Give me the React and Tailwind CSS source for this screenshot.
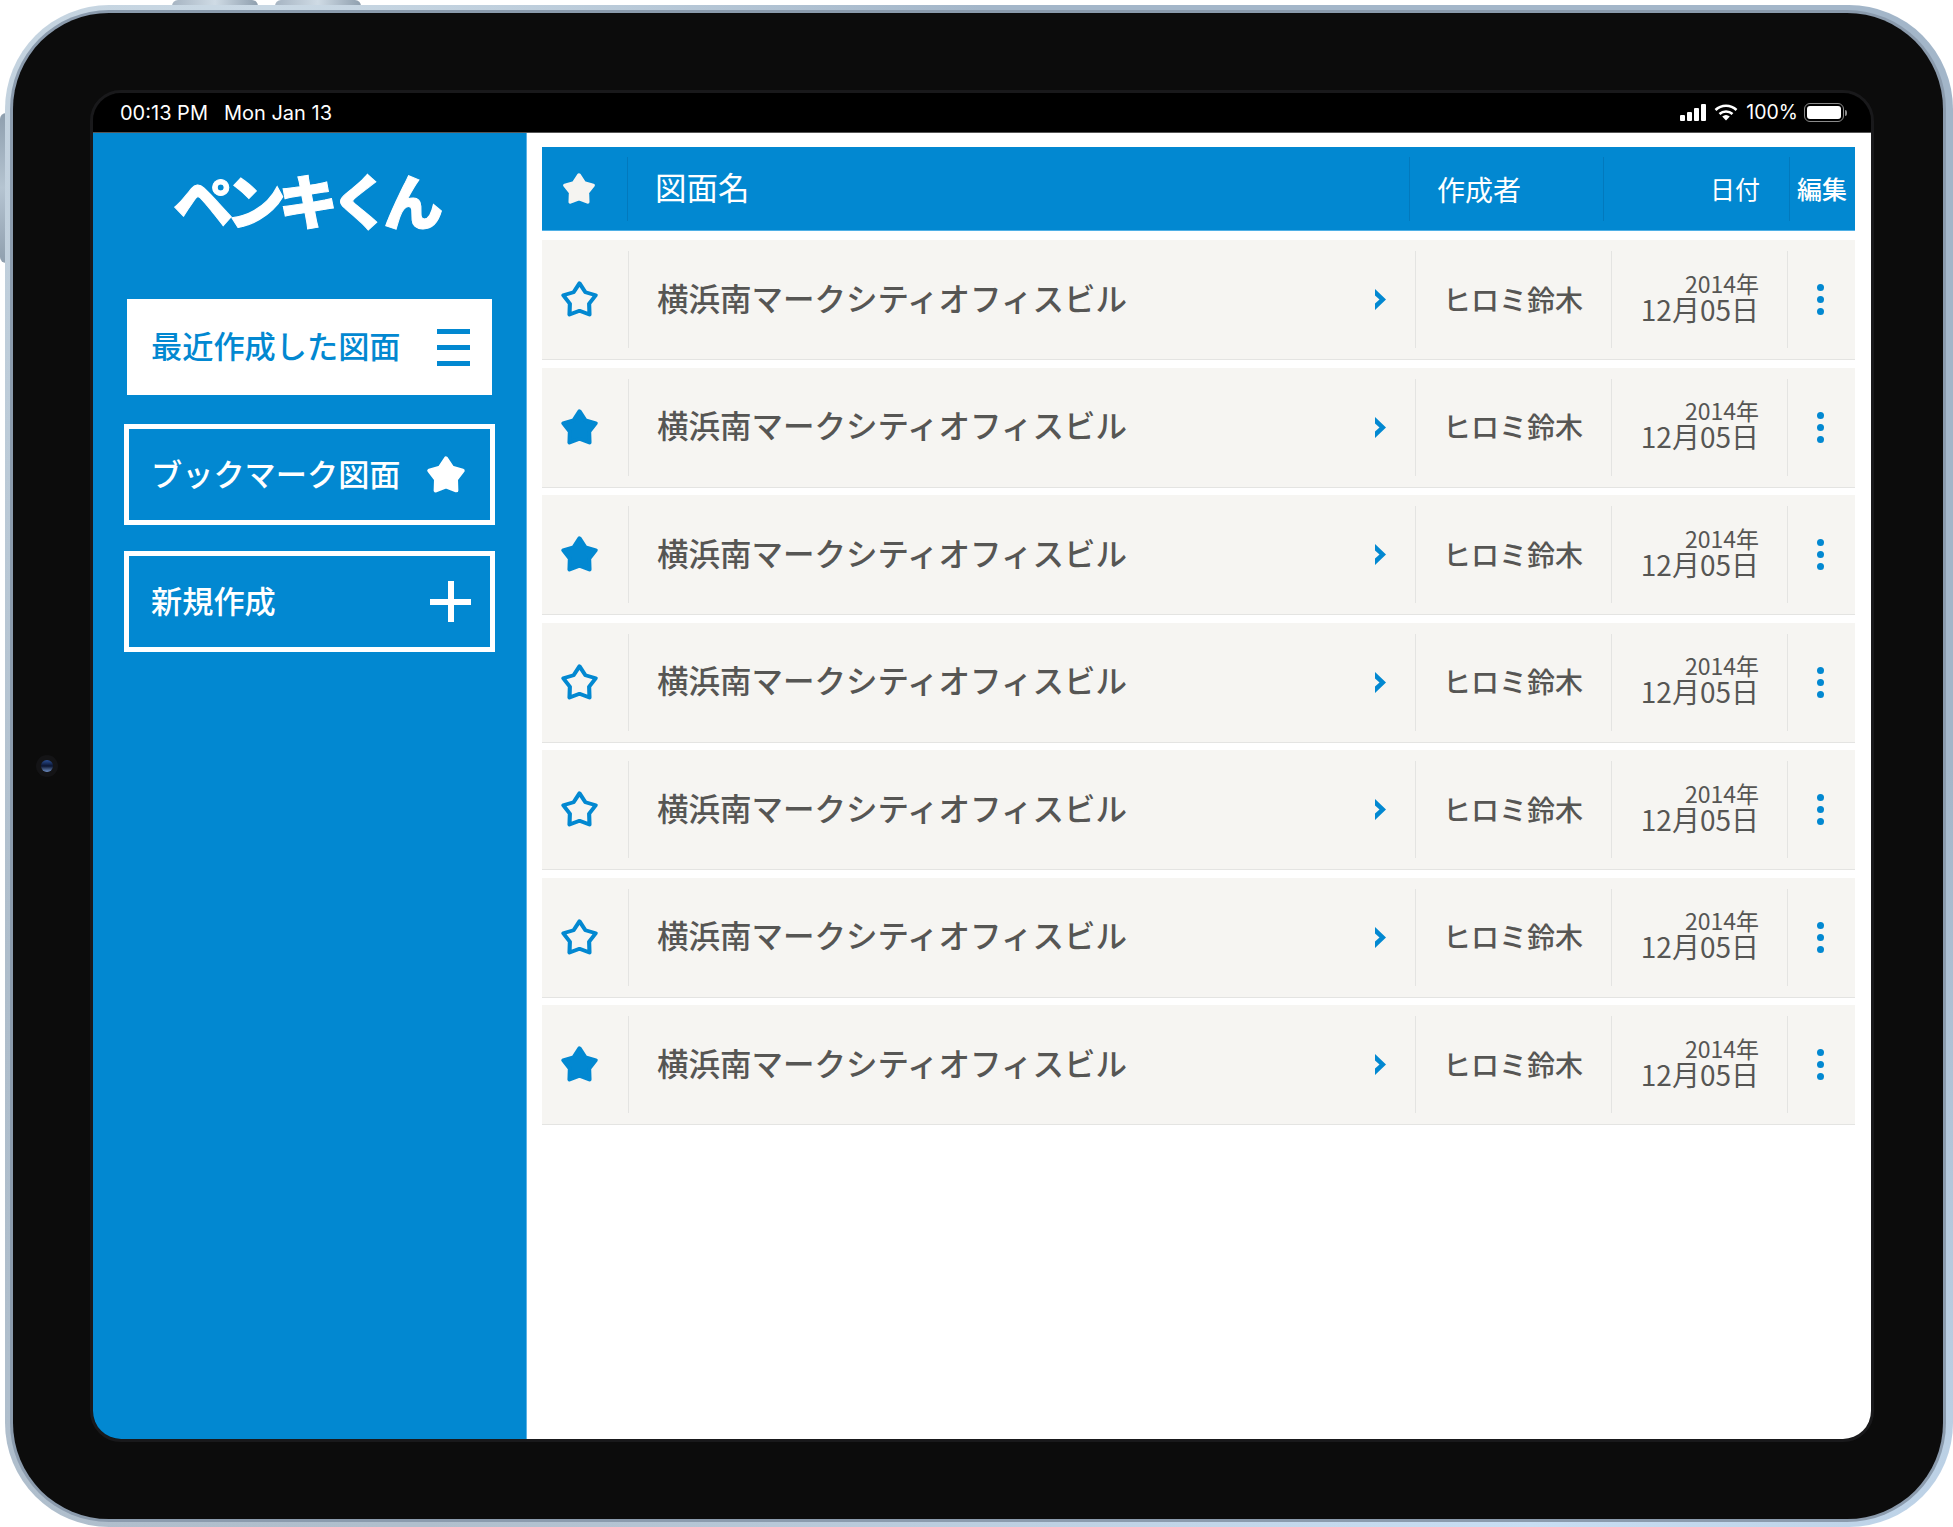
const ROWS = [false, true, true, false, false, false, true];

function StarIcon({ filled = false, color = "#0288d1", className = "" }) {
  return (
    <svg viewBox="0 0 32 36" preserveAspectRatio="none" className={className}>
      <polygon
        points="16,3 20.9,11.4 29.3,14.1 23.9,21.9 24.2,31.9 16,28.4 7.8,31.9 8.1,21.9 2.7,14.1 11.1,11.4"
        fill={filled ? color : "none"}
        stroke={color}
        strokeWidth="3.4"
        strokeLinejoin="round"
      />
    </svg>
  );
}

function StatusBar() {
  return (
    <div className="flex h-[40px] shrink-0 items-center justify-between border-b border-[#555555] bg-black pl-[27px] pr-[24px] font-['Inter',sans-serif] text-[20px] text-white">
      <div className="flex gap-[16px]">
        <span>00:13 PM</span>
        <span>Mon Jan 13</span>
      </div>
      <div className="flex items-center">
        <svg width="27" height="17" viewBox="0 0 27 17" className="mr-[7px]">
          <rect x="0" y="11" width="5" height="6" rx="1" fill="#fff" />
          <rect x="7" y="8" width="5" height="9" rx="1" fill="#fff" />
          <rect x="14" y="4" width="5" height="13" rx="1" fill="#fff" />
          <rect x="21" y="0" width="5" height="17" rx="1" fill="#fff" />
        </svg>
        <svg width="24" height="17" viewBox="0 0 24 17" className="mr-[8px]">
          <path d="M1.5 6 A15 15 0 0 1 22.5 6" fill="none" stroke="#fff" strokeWidth="2.6" />
          <path d="M5.5 10 A9.5 9.5 0 0 1 18.5 10" fill="none" stroke="#fff" strokeWidth="2.6" />
          <path d="M8.2 12.6 A6 6 0 0 1 15.8 12.6 L12 16.6 Z" fill="#fff" />
        </svg>
        <span className="mr-[6px] text-[19.5px]">100%</span>
        <div className="flex items-center">
          <div className="h-[19px] w-[40px] rounded-[6px] border border-[#8a8a8a] p-[2px]">
            <div className="h-full w-full rounded-[3px] bg-white" />
          </div>
          <div className="ml-[1px] h-[6px] w-[2px] rounded-r-sm bg-[#8a8a8a]" />
        </div>
      </div>
    </div>
  );
}

function Sidebar() {
  return (
    <aside className="flex w-[434px] shrink-0 flex-col border-r border-[#5cb3e6] bg-[#0288d1] px-[31px] text-[31.2px] font-medium">
      <div className="flex h-[166px] shrink-0 items-center justify-center pb-[34px] pr-[10px] text-[60px] leading-none font-black tracking-[-7.5px] text-white [-webkit-text-stroke:1px_#ffffff]">
        ペンキくん
      </div>
      <div className="mx-[3px] flex h-[96px] items-center justify-between bg-white pl-[24px] pr-[22px] text-[#0288d1]">
        <span className="mb-[3px]">最近作成した図面</span>
        <div className="flex w-[33px] flex-col gap-[11px]">
          <div className="h-[5px] bg-[#0288d1]" />
          <div className="h-[5px] bg-[#0288d1]" />
          <div className="h-[5px] bg-[#0288d1]" />
        </div>
      </div>
      <div className="mt-[29px] flex h-[101px] items-center justify-between border-[5px] border-white pl-[22px] pr-[24px] text-white">
        <span className="mb-[3px]">ブックマーク図面</span>
        <StarIcon filled color="#ffffff" className="h-[40px] w-[40px]" />
      </div>
      <div className="mt-[26px] flex h-[101px] items-center justify-between border-[5px] border-white pl-[22px] pr-[19px] text-white">
        <span className="mb-[2px]">新規作成</span>
        <div className="relative h-[41px] w-[41px]">
          <div className="absolute left-[18px] top-0 h-[41px] w-[6px] bg-white" />
          <div className="absolute left-0 top-[18px] h-[6px] w-[41px] bg-white" />
        </div>
      </div>
    </aside>
  );
}

function HeaderRow() {
  return (
    <div className="flex h-[84px] shrink-0 items-center border-b border-[#4fb0e6] bg-[#0288d1] text-white">
      <div className="flex h-[64px] w-[86px] items-center justify-center border-r border-[#0279bd] pr-[11px]">
        <StarIcon filled color="#f5f4f1" className="h-[34px] w-[34px]" />
      </div>
      <div className="flex h-[64px] w-[782px] items-center border-r border-[#0279bd] pb-[4px] pl-[27px] text-[31.5px]">図面名</div>
      <div className="flex h-[64px] w-[194px] items-center border-r border-[#0279bd] pl-[27px] text-[28px]">作成者</div>
      <div className="flex h-[64px] w-[186px] items-center justify-end border-r border-[#0279bd] pr-[29px] text-[25px]">日付</div>
      <div className="flex-1 pl-[7px] text-[25px] font-medium">編集</div>
    </div>
  );
}

function DrawingRow({ bookmarked }) {
  return (
    <div className="flex h-[120px] shrink-0 items-center border-b border-[#e4e4e2] bg-[#f6f5f2] font-medium text-[#565654]">
      <div className="flex h-[97px] w-[87px] items-center justify-center border-r border-[#e4e4e2] pr-[12px]">
        <StarIcon filled={bookmarked} className="h-[39px] w-[39px]" />
      </div>
      <div className="flex h-[97px] w-[787px] items-center justify-between border-r border-[#e4e4e2] pl-[28px] pr-[29px]">
        <span className="mb-[4px] whitespace-nowrap text-[31.5px]">横浜南マークシティオフィスビル</span>
        <svg width="11" height="21" viewBox="0 0 11 21">
          <polygon points="0,0 11,10.5 0,21 0,14.5 4.5,10.5 0,6.5" fill="#0288d1" />
        </svg>
      </div>
      <div className="flex h-[97px] w-[196px] items-center border-r border-[#e4e4e2] pb-[2px] pl-[27px] text-[28px]">ヒロミ鈴木</div>
      <div className="flex h-[97px] w-[176px] flex-col items-end justify-center border-r border-[#e4e4e2] pb-[8px] pr-[28px] font-normal">
        <div className="text-[23px] leading-[26px]">2014年</div>
        <div className="text-[28px] leading-[26px]">12月05日</div>
      </div>
      <div className="flex flex-1 flex-col items-center gap-[5px] pr-[3px]">
        <div className="h-[7px] w-[7px] rounded-full bg-[#0288d1]" />
        <div className="h-[7px] w-[7px] rounded-full bg-[#0288d1]" />
        <div className="h-[7px] w-[7px] rounded-full bg-[#0288d1]" />
      </div>
    </div>
  );
}

function DrawingList() {
  return (
    <main className="flex min-w-0 flex-1 flex-col bg-white pl-[15px] pr-[16px] pt-[14px]">
      <HeaderRow />
      <div className="mt-[9px] flex flex-col gap-[7.5px]">
        {ROWS.map((bookmarked, index) => (
          <DrawingRow key={index} bookmarked={bookmarked} />
        ))}
      </div>
    </main>
  );
}

export default function App() {
  return (
    <div className="relative h-[1527px] w-[1953px] overflow-hidden bg-white pl-[5px] pt-[5px] font-['Noto_Sans_CJK_JP','Noto_Sans',sans-serif]">
      {/* hardware buttons behind the frame */}
      <div className="absolute left-[172px] top-0 h-[8px] w-[86px] rounded-t-[6px] bg-gradient-to-r from-[#a6b4c2] via-[#cfdbe5] to-[#8f9fae]" />
      <div className="absolute left-[275px] top-0 h-[8px] w-[86px] rounded-t-[6px] bg-gradient-to-r from-[#a6b4c2] via-[#cfdbe5] to-[#8f9fae]" />
      <div className="absolute left-0 top-[113px] h-[150px] w-[8px] rounded-l-[6px] bg-gradient-to-b from-[#8f9fae] via-[#b5c4d1] to-[#8f9fae]" />

      <div className="relative h-[1522px] w-[1948px] rounded-[104px] bg-[conic-gradient(from_0deg,#a3b6c9,#a3b6c9_25%,#c8def3_40%,#b0bfcd_60%,#aebdcb_72%,#c9d8e4_88%,#a3b6c9)] py-[5px] pl-[5px] pr-[7px]">
        <div className="h-full w-full rounded-[99px] bg-[#8b9bad] p-[3px]">
          <div className="h-full w-full rounded-[96px] bg-[#0c0c0c] pb-[77px] pl-[77px] pr-[69px] pt-[77px]">
            <div className="h-full w-full rounded-[31px] border-[3px] border-[#19191b]">
              <div className="flex h-full w-full flex-col overflow-hidden rounded-[28px]">
                <StatusBar />
                <div className="flex min-h-0 flex-1">
                  <Sidebar />
                  <DrawingList />
                </div>
              </div>
            </div>
          </div>
        </div>
      </div>

      {/* front camera */}
      <div className="absolute left-[36px] top-[755px] h-[22px] w-[22px] rounded-full bg-[#141416] p-[5px]">
        <div className="h-full w-full rounded-full bg-[linear-gradient(#2a4f95,#0a1430_50%,#6f8fc4)]" />
      </div>
    </div>
  );
}
